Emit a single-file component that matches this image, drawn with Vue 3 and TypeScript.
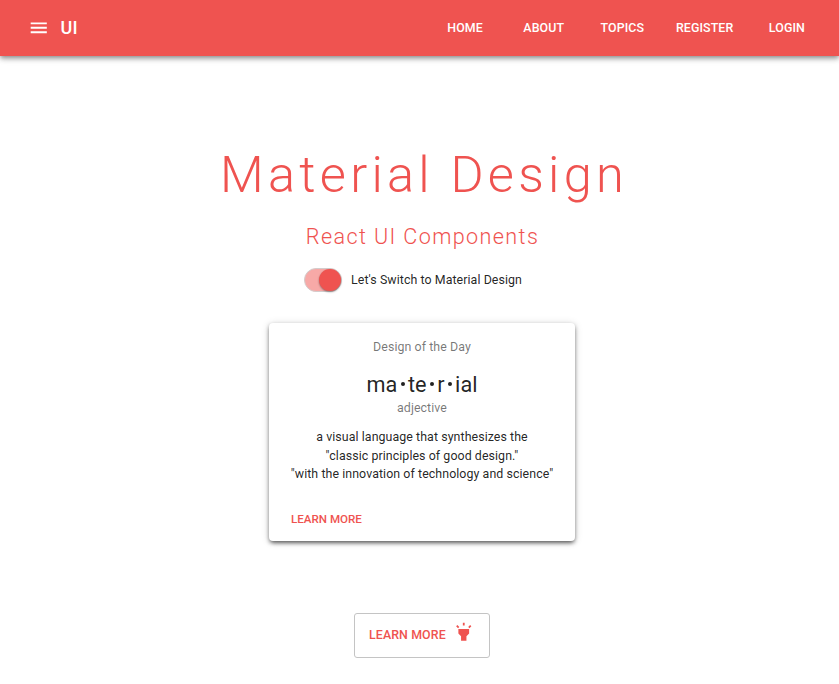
<script setup lang="ts">
import { ref } from 'vue'

interface NavItem {
  label: string
  size: string
}

const navItems: NavItem[] = [
  { label: 'Home', size: 'regular' },
  { label: 'About', size: 'regular' },
  { label: 'Topics', size: 'regular' },
  { label: 'Register', size: 'wide' },
  { label: 'Login', size: 'regular' },
]

const definition: string[] = [
  'a visual language that synthesizes the',
  '"classic principles of good design."',
  '"with the innovation of technology and science"',
]

const enabled = ref(true)
</script>

<template>
  <div class="page">
    <header class="app-bar">
      <button class="menu" aria-label="Menu">
        <svg viewBox="0 0 24 24"><path d="M3 18h18v-2H3v2zm0-5h18v-2H3v2zm0-7v2h18V6H3z" /></svg>
      </button>
      <span class="brand">UI</span>
      <nav class="nav">
        <a v-for="item in navItems" :key="item.label" :class="['nav-item', item.size]">{{ item.label }}</a>
      </nav>
    </header>

    <main class="content">
      <h1 class="title">Material Design</h1>
      <h2 class="subtitle">React UI Components</h2>

      <div class="switch-row" @click="enabled = !enabled">
        <span :class="['track', { on: enabled }]"><span class="thumb"></span></span>
        <span class="switch-label">Let's Switch to Material Design</span>
      </div>

      <section class="card">
        <p class="muted">Design of the Day</p>
        <h3 class="word">ma<i class="dot"></i>te<i class="dot"></i>r<i class="dot"></i>ial</h3>
        <p class="muted kind">adjective</p>
        <div class="definition">
          <p v-for="line in definition" :key="line">{{ line }}</p>
        </div>
        <a class="card-action">Learn More</a>
      </section>

      <button class="outlined">
        <span>Learn More</span>
        <svg viewBox="0 0 24 24">
          <path d="M6 14l3 3v5h6v-5l3-3V9H6zm5-12h2v3h-2zM3.5 5.875L4.914 4.46l2.12 2.122L5.62 7.997zm13.46.71l2.123-2.12 1.414 1.414L18.375 8z" />
        </svg>
      </button>
    </main>
  </div>
</template>

<style>
body {
  margin: 0;
  background: #fff;
}
</style>

<style scoped>
.page {
  box-sizing: border-box;
  height: 684px;
  overflow: hidden;
  font-family: Roboto, "Liberation Sans", sans-serif;
  color: rgba(0, 0, 0, 0.87);
}

.app-bar {
  box-sizing: border-box;
  display: flex;
  align-items: center;
  height: 56px;
  padding: 0 12.8px 0 28px;
  background: #ef5350;
  color: #fff;
  box-shadow: 0 2px 4px -1px rgba(0, 0, 0, 0.25), 0 3px 5px rgba(0, 0, 0, 0.22), 0 1px 9px rgba(0, 0, 0, 0.12);
}

button {
  margin: 0;
  padding: 0;
  border: 0;
  background: none;
  font: inherit;
  color: inherit;
}

.menu {
  display: flex;
  width: 21.5px;
  height: 21.5px;
}

svg {
  display: block;
  width: 21.5px;
  height: 21.5px;
  fill: currentColor;
}

.brand {
  margin-left: 11px;
  font-size: 18px;
  font-weight: 500;
  line-height: 28px;
  letter-spacing: 0.13px;
}

.nav {
  display: flex;
  margin-left: auto;
}

.nav-item {
  width: 78.6px;
  text-align: center;
  text-transform: uppercase;
  font-size: 12.4px;
  font-weight: 500;
  line-height: 22px;
  letter-spacing: 0.1px;
}

.nav-item.wide {
  width: 86px;
}

.content {
  display: flex;
  flex-direction: column;
  align-items: center;
  padding: 87px 0 0 5px;
}

h1,
h2,
h3,
p {
  margin: 0;
  font-weight: 400;
}

.title {
  padding-left: 4px;
  color: #ef5350;
  font-size: 50.5px;
  font-weight: 300;
  line-height: 64px;
  letter-spacing: 4.25px;
}

.subtitle {
  margin-top: 15px;
  padding-left: 1px;
  color: #ef5350;
  font-size: 21.6px;
  font-weight: 300;
  line-height: 30px;
  letter-spacing: 1.38px;
}

.switch-row {
  display: flex;
  align-items: center;
  gap: 9px;
  height: 28px;
  margin-top: 14px;
  padding-right: 18px;
}

.track {
  box-sizing: border-box;
  display: flex;
  align-items: center;
  width: 38px;
  height: 24px;
  padding: 0 1px;
  border: 1px solid #d3cccc;
  border-radius: 12px;
  background: #e0e0e0;
}

.track.on {
  justify-content: flex-end;
  background: #f7a9a7;
}

.thumb {
  width: 22px;
  height: 22px;
  margin-right: -1px;
  border-radius: 50%;
  background: #ef5350;
  box-shadow: 0 1px 2px rgba(0, 0, 0, 0.4);
}

.switch-label {
  font-size: 12.4px;
  line-height: 20px;
  letter-spacing: 0.07px;
}

.card {
  box-sizing: border-box;
  display: flex;
  flex-direction: column;
  align-items: center;
  width: 306px;
  height: 218px;
  margin-top: 29px;
  padding-top: 14px;
  border-radius: 4px;
  background: #fff;
  box-shadow: 0 3px 4px -2px rgba(0, 0, 0, 0.5), 0 2px 4px rgba(0, 0, 0, 0.32), 0 1px 9px rgba(0, 0, 0, 0.14);
}

.muted {
  color: rgba(0, 0, 0, 0.54);
  font-size: 12.4px;
  line-height: 20px;
  letter-spacing: 0.07px;
}

.word {
  margin-top: 14px;
  font-size: 21.7px;
  line-height: 28px;
}

.dot {
  display: inline-block;
  width: 4px;
  height: 4px;
  margin: 0 3.3px;
  border-radius: 50%;
  background: currentColor;
  vertical-align: 6px;
}

.kind {
  margin-top: -1px;
}

.definition {
  margin-top: 10px;
  text-align: center;
  font-size: 12.4px;
  line-height: 18.6px;
  letter-spacing: 0.07px;
}

.card-action {
  align-self: flex-start;
  margin: 25px 0 0 22px;
  color: #ef5350;
  text-transform: uppercase;
  font-size: 11.6px;
  font-weight: 500;
  line-height: 20px;
}

.outlined {
  box-sizing: border-box;
  display: flex;
  align-items: center;
  justify-content: space-between;
  width: 136px;
  height: 45px;
  margin-top: 72px;
  padding: 0 15px 2px 14px;
  border: 1px solid #c4c4c4;
  border-radius: 3px;
  color: #ef5350;
  text-transform: uppercase;
  font-size: 12.4px;
  font-weight: 500;
  line-height: 20px;
  letter-spacing: 0.1px;
}

.outlined svg {
  margin-bottom: 6px;
}
</style>
